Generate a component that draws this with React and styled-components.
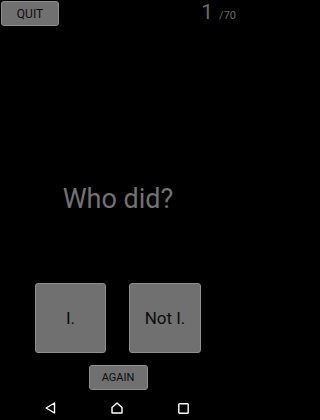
import React from 'react';
import styled, { createGlobalStyle } from 'styled-components';

const GlobalStyle = createGlobalStyle`
  html, body {
    margin: 0;
    padding: 0;
    background: #000;
  }
  body {
    font-family: Roboto, "Noto Sans", sans-serif;
  }
`;

const Screen = styled.div`
  width: 236px;
  height: 420px;
  background: #000;
  display: flex;
  flex-direction: column;
  overflow: hidden;
`;

const Header = styled.div`
  display: flex;
  justify-content: space-between;
  align-items: flex-start;
  padding: 1px 0 0 1px;
  height: 25px;
`;

const Button = styled.button`
  font-family: Roboto, "Noto Sans", sans-serif;
  background: #707070;
  border: 1px solid #8e8e8e;
  border-radius: 3px;
  color: #0c0c0c;
  padding: 0;
  margin: 0;
  display: flex;
  align-items: center;
  justify-content: center;
  width: ${(props) => props.w}px;
  height: ${(props) => props.h}px;
  font-size: ${(props) => props.size}px;
`;

const Counter = styled.div`
  display: flex;
  align-items: baseline;
  color: #6a6a6a;
  margin-top: 1px;
  line-height: 1;
`;

const Current = styled.span`
  font-size: 21px;
  margin-right: 6px;
`;

const Total = styled.span`
  font-size: 11px;
`;

const Question = styled.div`
  flex: 1;
  display: flex;
  justify-content: center;
  padding-top: 157px;
  color: #727272;
  font-size: 27px;
`;

const Choices = styled.div`
  display: flex;
  justify-content: center;
  gap: 23px;
  margin-bottom: 12px;
`;

const AgainRow = styled.div`
  display: flex;
  justify-content: center;
  margin-bottom: 6px;
`;

const NavBar = styled.div`
  height: 24px;
  display: flex;
  align-items: center;
  justify-content: space-between;
  padding: 0 47px 0 45px;
`;

const Back = () => (
  <svg width="11" height="12" viewBox="0 0 11 12">
    <path d="M9.5 1 L1.2 6 L9.5 11 Z" fill="none" stroke="#fff" strokeWidth="1.4" strokeLinejoin="round" />
  </svg>
);

const Home = () => (
  <svg width="12" height="12" viewBox="0 0 12 12">
    <path d="M1 5.5 L6 1 L11 5.5 L11 11 L1 11 Z" fill="none" stroke="#fff" strokeWidth="1.4" strokeLinejoin="round" />
  </svg>
);

const Recent = () => (
  <svg width="11" height="11" viewBox="0 0 11 11">
    <rect x="0.8" y="0.8" width="9.4" height="9.4" rx="0.8" fill="none" stroke="#fff" strokeWidth="1.4" />
  </svg>
);

const App = () => {
  return (
    <Screen>
      <GlobalStyle />
      <Header>
        <Button w={58} h={25} size={12}>QUIT</Button>
        <Counter>
          <Current>1</Current>
          <Total>/70</Total>
        </Counter>
      </Header>
      <Question>Who did?</Question>
      <Choices>
        <Button w={71} h={70} size={17}>I.</Button>
        <Button w={72} h={70} size={17}>Not I.</Button>
      </Choices>
      <AgainRow>
        <Button w={59} h={25} size={11}>AGAIN</Button>
      </AgainRow>
      <NavBar>
        <Back />
        <Home />
        <Recent />
      </NavBar>
    </Screen>
  );
};

export default App;
